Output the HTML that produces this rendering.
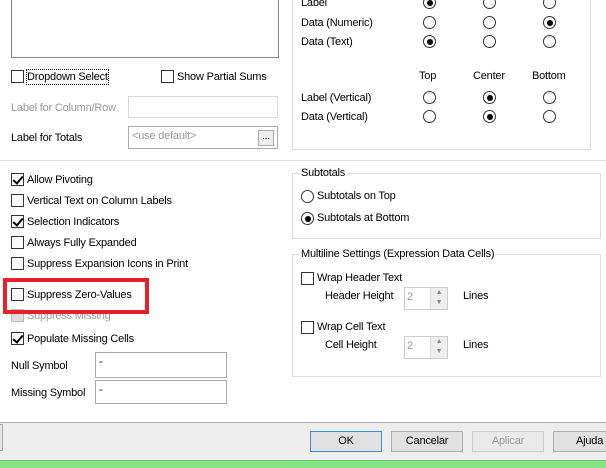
<!DOCTYPE html>
<html><head><style>
*{box-sizing:border-box;margin:0;padding:0}
body{width:606px;height:468px;position:relative;overflow:hidden;background:#fff;font-family:"Liberation Sans",sans-serif;font-size:11px;letter-spacing:-0.2px;color:#000}
.a{position:absolute;white-space:nowrap;line-height:14px}
.cb{position:absolute;width:13px;height:13px;border:1px solid #333;background:#fff}
.cb.k::after{content:"";position:absolute;left:3px;top:0px;width:4px;height:8px;border:solid #000;border-width:0 2px 2px 0;transform:rotate(40deg)}
.rb{position:absolute;width:13px;height:13px;border:1px solid #333;border-radius:50%;background:#fff}
.rb.k::after{content:"";position:absolute;left:2.5px;top:2.5px;width:6px;height:6px;border-radius:50%;background:#000}
.box{position:absolute;border:1px solid #dcdcdc}
.in{position:absolute;border:1px solid #aaa;background:#fff}
.btn{position:absolute;height:21px;width:72px;border:1px solid #adadad;background:#e1e1e1;text-align:center;line-height:19px}
.g{color:#999}
</style></head><body>
<div class="in" style="left:11px;top:-2px;width:268px;height:60px;border-color:#828790"></div>
<div class="cb" style="left:11px;top:70px"></div><div class="a" style="left:27px;top:70px;outline:1px dotted #000">Dropdown Select</div>
<div class="cb" style="left:161px;top:70px"></div><div class="a" style="left:177px;top:70px">Show Partial Sums</div>
<div class="a g" style="left:11px;top:101px">Label for Column/Row</div>
<div class="in" style="left:128px;top:96px;width:150px;height:22px;border-color:#d9d9d9"></div>
<div class="a" style="left:11px;top:131px">Label for Totals</div>
<div class="in" style="left:128px;top:126px;width:150px;height:23px"><span class="a g" style="left:3px;top:2px">&lt;use default&gt;</span><div style="position:absolute;right:3px;top:3px;width:16px;height:16px;border:1px solid #aaa;background:#eee;font-size:10px;text-align:center;line-height:12px">...</div></div>

<div class="box" style="left:292px;top:-2px;width:299px;height:152px"></div>
<div class="a" style="left:301px;top:-4px">Label</div>
<div class="a" style="left:301px;top:16px">Data (Numeric)</div>
<div class="a" style="left:301px;top:35px">Data (Text)</div>
<div class="rb k" style="left:423px;top:-4px"></div><div class="rb" style="left:483px;top:-4px"></div><div class="rb" style="left:543px;top:-4px"></div>
<div class="rb" style="left:423px;top:16px"></div><div class="rb" style="left:483px;top:16px"></div><div class="rb k" style="left:543px;top:16px"></div>
<div class="rb k" style="left:423px;top:35px"></div><div class="rb" style="left:483px;top:35px"></div><div class="rb" style="left:543px;top:35px"></div>
<div class="a" style="left:419px;top:69px">Top</div><div class="a" style="left:473px;top:69px">Center</div><div class="a" style="left:532px;top:69px">Bottom</div>
<div class="a" style="left:301px;top:91px">Label (Vertical)</div>
<div class="a" style="left:301px;top:110px">Data (Vertical)</div>
<div class="rb" style="left:423px;top:91px"></div><div class="rb k" style="left:483px;top:91px"></div><div class="rb" style="left:543px;top:91px"></div>
<div class="rb" style="left:423px;top:110px"></div><div class="rb k" style="left:483px;top:110px"></div><div class="rb" style="left:543px;top:110px"></div>

<div style="position:absolute;left:0;top:160px;width:606px;height:1px;background:#dcdcdc"></div>

<div class="cb k" style="left:11px;top:173px"></div><div class="a" style="left:27px;top:173px">Allow Pivoting</div>
<div class="cb" style="left:11px;top:194px"></div><div class="a" style="left:27px;top:194px">Vertical Text on Column Labels</div>
<div class="cb k" style="left:11px;top:215px"></div><div class="a" style="left:27px;top:215px">Selection Indicators</div>
<div class="cb" style="left:11px;top:236px"></div><div class="a" style="left:27px;top:236px">Always Fully Expanded</div>
<div class="cb" style="left:11px;top:257px"></div><div class="a" style="left:27px;top:257px">Suppress Expansion Icons in Print</div>
<div class="cb" style="left:11px;top:288px"></div><div class="a" style="left:27px;top:288px">Suppress Zero-Values</div>
<div class="cb" style="left:11px;top:309px;border-color:#bbb;background:#ddd"></div><div class="a g" style="left:27px;top:309px">Suppress Missing</div>
<div class="cb k" style="left:11px;top:332px"></div><div class="a" style="left:27px;top:332px">Populate Missing Cells</div>
<div style="position:absolute;left:3px;top:278px;width:146px;height:36px;border:4px solid #e8202a"></div>
<div class="a" style="left:11px;top:359px">Null Symbol</div>
<div class="in" style="left:95px;top:352px;width:132px;height:26px"><span class="a" style="left:3px;top:2px">-</span></div>
<div class="a" style="left:11px;top:386px">Missing Symbol</div>
<div class="in" style="left:95px;top:380px;width:132px;height:24px"><span class="a" style="left:3px;top:2px">-</span></div>

<div class="box" style="left:292px;top:173px;width:309px;height:66px"></div>
<div class="a" style="left:299px;top:166px;background:#fff;padding:0 2px">Subtotals</div>
<div class="rb" style="left:301px;top:190px"></div><div class="a" style="left:317px;top:189px">Subtotals on Top</div>
<div class="rb k" style="left:301px;top:212px"></div><div class="a" style="left:317px;top:211px">Subtotals at Bottom</div>
<div class="box" style="left:292px;top:254px;width:309px;height:123px"></div>
<div class="a" style="left:299px;top:247px;background:#fff;padding:0 2px">Multiline Settings (Expression Data Cells)</div>
<div class="cb" style="left:301px;top:272px"></div><div class="a" style="left:317px;top:271px">Wrap Header Text</div>
<div class="a" style="left:325px;top:289px">Header Height</div>
<div class="in" style="left:404px;top:287px;width:44px;height:23px;border-color:#ccc"><span class="a g" style="left:2px;top:2px">2</span><div style="position:absolute;right:0;top:0;width:17px;height:21px;background:#eee;border-left:1px solid #ddd;font-size:7px;color:#888;text-align:center;line-height:10px">▲<br>▼</div></div>
<div class="a" style="left:463px;top:289px">Lines</div>
<div class="cb" style="left:301px;top:321px"></div><div class="a" style="left:317px;top:320px">Wrap Cell Text</div>
<div class="a" style="left:325px;top:338px">Cell Height</div>
<div class="in" style="left:404px;top:336px;width:44px;height:23px;border-color:#ccc"><span class="a g" style="left:2px;top:2px">2</span><div style="position:absolute;right:0;top:0;width:17px;height:21px;background:#eee;border-left:1px solid #ddd;font-size:7px;color:#888;text-align:center;line-height:10px">▲<br>▼</div></div>
<div class="a" style="left:463px;top:338px">Lines</div>

<div style="position:absolute;left:0;top:422px;width:606px;height:38px;background:#eee;border-top:1px solid #adadad"></div>
<div style="position:absolute;left:0;top:424px;width:3px;height:27px;border:1px solid #aaa;border-left:0;background:#e4e4e4"></div>
<div class="btn" style="left:310px;top:431px;border-color:#3d8fe0">OK</div>
<div class="btn" style="left:391px;top:431px">Cancelar</div>
<div class="btn" style="left:472px;top:431px;border-color:#ccc;background:#eaeaea;color:#999">Aplicar</div>
<div class="btn" style="left:553px;top:431px;width:72px;text-align:left;padding-left:22px">Ajuda</div>
<div style="position:absolute;left:0;top:460px;width:606px;height:8px;background:#86e486;border-top:1px solid #6cc46c"></div>
</body></html>
